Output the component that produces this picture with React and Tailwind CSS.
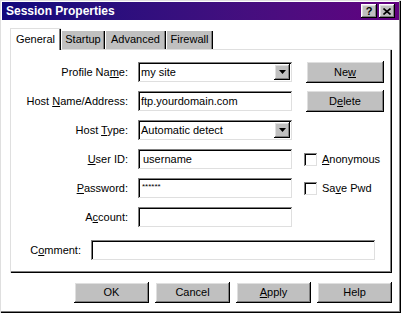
const raised =
  "bg-[#c0c0c0] shadow-[inset_-1px_-1px_0_#000,inset_1px_1px_0_#fff,inset_-2px_-2px_0_#808080,inset_2px_2px_0_#dfdfdf]";
const sunken =
  "bg-white shadow-[inset_1px_1px_0_#808080,inset_-1px_-1px_0_#dfdfdf,inset_2px_2px_0_#000,inset_-2px_-2px_0_#fff]";

function Button({ children, className = "" }) {
  return <div className={`flex items-center justify-center ${raised} ${className}`}>{children}</div>;
}

function Field({ children, className = "", combo }) {
  return (
    <div className={`flex items-center h-[20px] ${sunken} ${className}`}>
      <div className="flex-1 pl-[3px] whitespace-nowrap overflow-hidden">{children}</div>
      {combo && (
        <div className={`w-[16px] h-[16px] mr-[2px] flex items-center justify-center ${raised}`}>
          <svg width="7" height="4" viewBox="0 0 7 4">
            <polygon points="0,0 7,0 3.5,4" fill="#000" />
          </svg>
        </div>
      )}
    </div>
  );
}

function Row({ label, children, extra, className = "" }) {
  return (
    <div className={`flex items-center h-[20px] ${className}`}>
      <div className="w-[118px] text-right whitespace-nowrap">{label}</div>
      <div className="ml-[10px] w-[154px]">{children}</div>
      {extra}
    </div>
  );
}

function Check({ children }) {
  return (
    <div className="flex items-center ml-[12px]">
      <div className={`w-[13px] h-[13px] ${sunken}`} />
      <span className="ml-[5px]">{children}</span>
    </div>
  );
}

export default function App() {
  return (
    <div className="w-[401px] h-[313px] bg-white p-[2px] flex flex-col text-[11px] leading-none text-black font-['Liberation_Sans',Arial,sans-serif] shadow-[inset_1px_1px_0_#dfdfdf,inset_-1px_-1px_0_#000,inset_-2px_-2px_0_#808080]">
      <div className="h-[18px] flex items-center bg-gradient-to-r from-[#10087c] to-[#620080] pl-[4px] pr-[4px]">
        <span className="flex-1 text-white font-bold text-[12px]">Session Properties</span>
        <div className="flex gap-[2px]">
          <Button className="w-[16px] h-[14px] font-bold text-[11px]">?</Button>
          <Button className="w-[16px] h-[14px]">
            <svg width="8" height="7" viewBox="0 0 8 7">
              <path d="M0.5 0.5 L7.5 6.5 M7.5 0.5 L0.5 6.5" stroke="#000" strokeWidth="1.6" />
            </svg>
          </Button>
        </div>
      </div>

      <div className="mt-[8px] ml-[8px] flex items-end h-[21px]">
        <div className="relative z-10 -mb-[1px] w-[51px] h-[22px] bg-white flex items-center justify-center shadow-[inset_1px_1px_0_#dfdfdf,inset_-1px_0_0_#000,inset_-2px_0_0_#808080]">
          General
        </div>
        <div className="w-[44px] h-[19px] bg-[#c0c0c0] flex items-center justify-center shadow-[inset_1px_1px_0_#fff,inset_-1px_0_0_#000,inset_-2px_0_0_#808080]">
          Startup
        </div>
        <div className="w-[61px] h-[19px] bg-[#c0c0c0] flex items-center justify-center shadow-[inset_1px_1px_0_#fff,inset_-1px_0_0_#000,inset_-2px_0_0_#808080]">
          Advanced
        </div>
        <div className="w-[47px] h-[19px] bg-[#c0c0c0] flex items-center justify-center shadow-[inset_1px_1px_0_#fff,inset_-1px_0_0_#000,inset_-2px_0_0_#808080]">
          Firewall
        </div>
      </div>

      <div className="ml-[8px] w-[382px] h-[224px] pt-[13px] flex flex-col gap-[9px] shadow-[inset_1px_1px_0_#dfdfdf,inset_-1px_-1px_0_#000,inset_-2px_-2px_0_#808080]">
        <Row
          label={<>Profile Na<u>m</u>e:</>}
          extra={<Button className="ml-[14px] w-[78px] h-[22px]">Ne<u>w</u></Button>}
        >
          <Field combo>my site</Field>
        </Row>
        <Row
          label={<>Host <u>N</u>ame/Address:</>}
          extra={<Button className="ml-[14px] w-[78px] h-[22px]">D<u>e</u>lete</Button>}
        >
          <Field>ftp.yourdomain.com</Field>
        </Row>
        <Row label={<>Host <u>T</u>ype:</>}>
          <Field combo>Automatic detect</Field>
        </Row>
        <Row label={<><u>U</u>ser ID:</>} extra={<Check><u>A</u>nonymous</Check>}>
          <Field><span className="pl-[2px]">username</span></Field>
        </Row>
        <Row label={<><u>P</u>assword:</>} extra={<Check>Sa<u>v</u>e Pwd</Check>}>
          <Field><span className="text-[8px] pl-[1px] relative -top-[3px]">******</span></Field>
        </Row>
        <Row label={<>A<u>c</u>count:</>}>
          <Field />
        </Row>
        <div className="flex items-center h-[20px] mt-[4px]">
          <div className="w-[71px] text-right">C<u>o</u>mment:</div>
          <Field className="ml-[10px] w-[284px]" />
        </div>
      </div>

      <div className="mt-[9px] ml-[72px] flex gap-[6px]">
        <Button className="w-[75px] h-[21px]">OK</Button>
        <Button className="w-[75px] h-[21px]">Cancel</Button>
        <Button className="w-[75px] h-[21px]"><u>A</u>pply</Button>
        <Button className="w-[75px] h-[21px]">Help</Button>
      </div>
    </div>
  );
}
